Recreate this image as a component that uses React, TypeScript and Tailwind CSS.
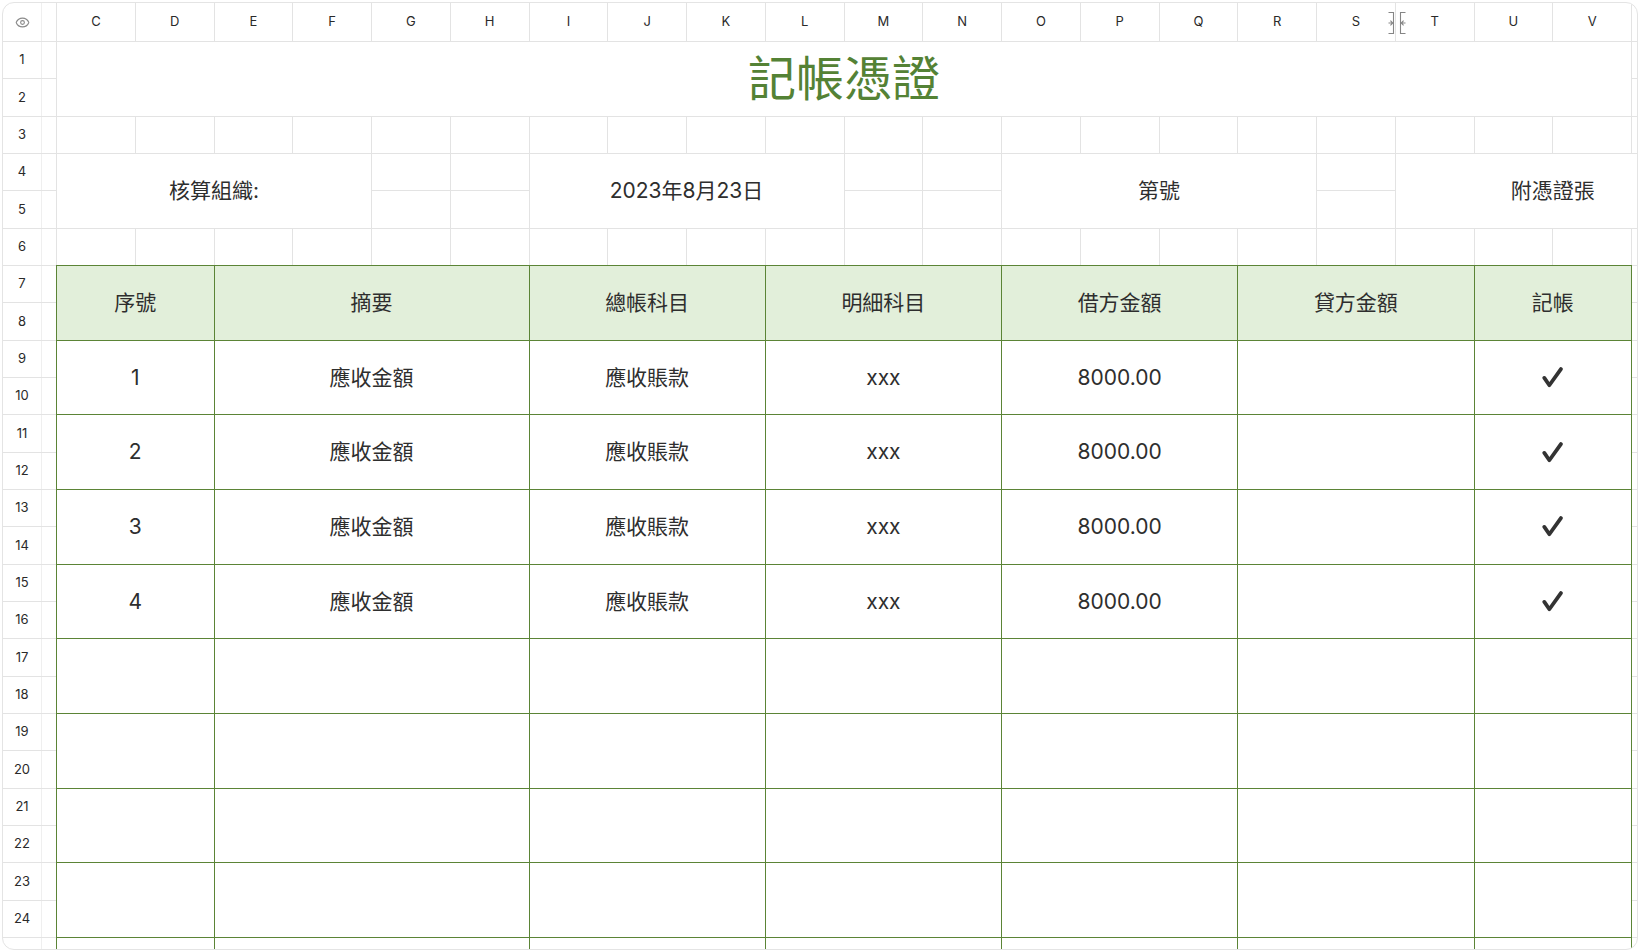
import React from 'react';
import { Eye } from 'lucide-react';

// widths of 1..4 columns and the full C..V run
const SPAN_W: Record<number, string> = {
  1: 'w-[78.75px]',
  2: 'w-[157.5px]',
  3: 'w-[236.25px]',
  4: 'w-[315px]',
  20: 'w-[1575px]',
};

const LETTERS = ['C', 'D', 'E', 'F', 'G', 'H', 'I', 'J', 'K', 'L', 'M', 'N', 'O', 'P', 'Q', 'R', 'S', 'T', 'U', 'V', 'W'];
const ROWS = Array.from({ length: 25 }, (_, i) => i + 1);

const TABLE_COLS = [
  { span: 2, label: '序號' },
  { span: 4, label: '摘要' },
  { span: 3, label: '總帳科目' },
  { span: 3, label: '明細科目' },
  { span: 3, label: '借方金額' },
  { span: 3, label: '貸方金額' },
  { span: 2, label: '記帳' },
];

type Entry = { no: string; summary: string; account: string; detail: string; debit: string; credit: string; posted: boolean };

const ENTRIES: Entry[] = [
  { no: '1', summary: '應收金額', account: '應收賬款', detail: 'xxx', debit: '8000.00', credit: '', posted: true },
  { no: '2', summary: '應收金額', account: '應收賬款', detail: 'xxx', debit: '8000.00', credit: '', posted: true },
  { no: '3', summary: '應收金額', account: '應收賬款', detail: 'xxx', debit: '8000.00', credit: '', posted: true },
  { no: '4', summary: '應收金額', account: '應收賬款', detail: 'xxx', debit: '8000.00', credit: '', posted: true },
  { no: '', summary: '', account: '', detail: '', debit: '', credit: '', posted: false },
  { no: '', summary: '', account: '', detail: '', debit: '', credit: '', posted: false },
  { no: '', summary: '', account: '', detail: '', debit: '', credit: '', posted: false },
  { no: '', summary: '', account: '', detail: '', debit: '', credit: '', posted: false },
];

const gray = 'shrink-0 border-r border-b border-[#e3e3e3]';
const green = 'shrink-0 border-r border-b border-[#5b8436]';

const Check = () => (
  <svg width="21" height="21" viewBox="0 0 20 20" fill="none">
    <path d="M2.2 10.4 L7 17.4 L18 2" stroke="#333" strokeWidth="3.6" strokeLinecap="round" strokeLinejoin="round" />
  </svg>
);

const ResizeCursor = () => (
  <svg width="18" height="22" viewBox="0 0 18 22" fill="none" stroke="#858585" strokeWidth="1.1">
    <path d="M0.5 0.5 H5.5 V21.5 H0.5" />
    <path d="M0.5 11 H4.6 M2.4 8.6 L4.8 11 L2.4 13.4" />
    <path d="M17.5 0.5 H12.5 V21.5 H17.5" />
    <path d="M17.5 11 H13.4 M15.6 8.6 L13.2 11 L15.6 13.4" />
  </svg>
);

const GrayRow = () => (
  <div className="flex h-[37.33px] shrink-0">
    {LETTERS.map((l) => (
      <div key={l} className={`${gray} w-[78.75px]`} />
    ))}
  </div>
);

const SplitCol = () => (
  <div className="flex flex-col shrink-0">
    <div className={`${gray} w-[78.75px] h-[37.33px]`} />
    <div className={`${gray} w-[78.75px] h-[37.33px]`} />
  </div>
);

const MergedInfo = ({ text }: { text: string }) => (
  <div className={`${gray} ${SPAN_W[4]} h-[74.67px] flex items-center justify-center text-[21px] text-[#2e2e2e]`}>{text}</div>
);

const TableRow = ({ cells, header }: { cells: React.ReactNode[]; header?: boolean }) => (
  <div className={`flex h-[74.67px] shrink-0 ${header ? 'bg-[#e2efda]' : ''}`}>
    {TABLE_COLS.map((c, i) => (
      <div key={c.label} className={`${green} ${SPAN_W[c.span]} flex items-center justify-center text-[21px] text-[#2e2e2e]`}>
        {cells[i]}
      </div>
    ))}
  </div>
);

export default function App() {
  return (
    <div className="w-[1640px] h-[952px] bg-white pt-[2px] pl-[2px] font-['Inter','Noto_Sans_CJK_TC',sans-serif]">
      <div className="relative w-[1636px] h-[948px] rounded-[12px] border border-[#e4e4e4] overflow-hidden bg-white">
        {/* column letters */}
        <div className="flex h-[39px]">
          <div className="w-[54px] shrink-0 flex border-r border-b border-[#e3e3e3]">
            <div className="w-[39px] border-r border-[#efefef] flex items-center justify-center">
              <Eye size={15} strokeWidth={1.8} color="#8a8a8a" />
            </div>
          </div>
          {LETTERS.map((l) => (
            <div key={l} className={`${gray} w-[78.75px] flex items-center justify-center text-[13px] text-[#2a2a2a]`}>
              {l === 'W' ? null : l}
            </div>
          ))}
        </div>

        <div className="flex">
          {/* row numbers */}
          <div className="w-[54px] shrink-0 flex flex-col">
            {ROWS.map((n) => (
              <div key={n} className="h-[37.33px] shrink-0 flex border-r border-b border-[#e3e3e3]">
                <div className="w-[39px] border-r border-[#efefef] flex items-center justify-center text-[13px] text-[#2a2a2a]">
                  {n < 25 ? n : null}
                </div>
              </div>
            ))}
          </div>

          {/* sheet */}
          <div className="flex flex-col">
            <div className="flex h-[74.67px] shrink-0">
              <div className={`${gray} ${SPAN_W[20]} flex items-center justify-center text-[48px] leading-none text-[#548235]`}>
                記帳憑證
              </div>
              <SplitCol />
            </div>

            <GrayRow />

            <div className="flex h-[74.67px] shrink-0">
              <MergedInfo text="核算組織:" />
              <SplitCol />
              <SplitCol />
              <MergedInfo text="2023年8月23日" />
              <SplitCol />
              <SplitCol />
              <MergedInfo text="第號" />
              <SplitCol />
              <MergedInfo text="附憑證張" />
            </div>

            <GrayRow />

            <div className="flex shrink-0">
              <div className="w-[1576px] -ml-px -mt-px shrink-0 flex flex-col border-l border-t border-[#5b8436]">
                <TableRow header cells={TABLE_COLS.map((c) => c.label)} />
                {ENTRIES.map((e, i) => (
                  <TableRow
                    key={i}
                    cells={[e.no, e.summary, e.account, e.detail, e.debit, e.credit, e.posted ? <Check /> : null]}
                  />
                ))}
                <div className="flex h-[37.33px] shrink-0">
                  {TABLE_COLS.map((c) => (
                    <div key={c.label} className={`shrink-0 border-r border-[#5b8436] ${SPAN_W[c.span]}`} />
                  ))}
                </div>
              </div>
              <div className="flex flex-col shrink-0">
                {ROWS.slice(6).map((n) => (
                  <div key={n} className={`${gray} w-[78.75px] h-[37.33px]`} />
                ))}
              </div>
            </div>
          </div>
        </div>

        <div className="absolute left-[1385px] top-[9px]">
          <ResizeCursor />
        </div>
      </div>
    </div>
  );
}
